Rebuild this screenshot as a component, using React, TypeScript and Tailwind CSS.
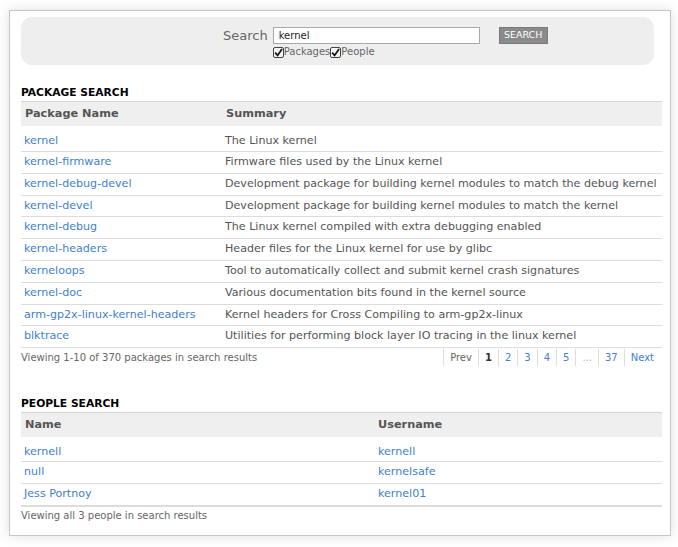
import React from "react";

const packages: [string, string][] = [
  ["kernel", "The Linux kernel"],
  ["kernel-firmware", "Firmware files used by the Linux kernel"],
  ["kernel-debug-devel", "Development package for building kernel modules to match the debug kernel"],
  ["kernel-devel", "Development package for building kernel modules to match the kernel"],
  ["kernel-debug", "The Linux kernel compiled with extra debugging enabled"],
  ["kernel-headers", "Header files for the Linux kernel for use by glibc"],
  ["kerneloops", "Tool to automatically collect and submit kernel crash signatures"],
  ["kernel-doc", "Various documentation bits found in the kernel source"],
  ["arm-gp2x-linux-kernel-headers", "Kernel headers for Cross Compiling to arm-gp2x-linux"],
  ["blktrace", "Utilities for performing block layer IO tracing in the linux kernel"],
];

const people: [string, string][] = [
  ["kernell", "kernell"],
  ["null", "kernelsafe"],
  ["Jess Portnoy", "kernel01"],
];

function Check() {
  return (
    <span className="inline-flex h-[11px] w-[11px] items-center justify-center rounded-[2px] border border-[#444] bg-[#f4f4f4]">
      <svg width="9" height="9" viewBox="0 0 9 9">
        <path d="M1.2 4.6 L3.6 7.4 L8 1" fill="none" stroke="#111" strokeWidth="1.7" />
      </svg>
    </span>
  );
}

export default function App() {
  return (
    <div className="min-h-[547px] bg-white pl-[9px] pt-[10px]" style={{ fontFamily: '"DejaVu Sans", Verdana, sans-serif' }}>
      <div className="h-[526px] w-[662px] border border-[#c6c6c6] bg-white pl-[11px] pr-[8px] pt-[6px] shadow-[0_0_12px_rgba(0,0,0,0.13)]">
        {/* search panel */}
        <div className="mr-[8px] h-[48px] rounded-[11px] bg-[#eeeeee] pl-[202px] pt-[10px]">
          <div className="flex items-start">
            <span className="mr-[5px] text-[13px] leading-[17px] text-[#666]">Search</span>
            <div className="flex flex-col">
              <div className="flex h-[17px] w-[207px] items-center border border-[#a9a9a9] bg-white pl-[5px] text-[10px] text-[#222]">
                kernel
              </div>
              <div className="mt-[2px] flex items-center text-[10px] leading-[12px] text-[#666]">
                <Check />
                <span>Packages</span>
                <Check />
                <span>People</span>
              </div>
            </div>
            <div className="ml-[19px] flex h-[17px] w-[49px] items-center justify-center border border-[#7a7a7a] bg-[#8a8a8a] text-[9.5px] text-white">
              SEARCH
            </div>
          </div>
        </div>

        {/* package search */}
        <div className="mt-[21px] mb-[2px] text-[10.7px] font-bold leading-[13px] text-black">PACKAGE SEARCH</div>
        <div className="border-t border-[#d6d6d6]">
          <div className="flex h-[24px] items-center bg-[#efefef] text-[11.3px] font-bold text-[#555]">
            <div className="w-[200px] pl-[4px]">Package Name</div>
            <div className="pl-[5px]">Summary</div>
          </div>
          {packages.map(([name, summary], i) => (
            <div
              key={name}
              className={
                i === 0
                  ? "flex h-[26px] items-center border-b border-[#dcdcdc] pt-[6px] text-[11.1px] whitespace-nowrap"
                  : "flex h-[21.8px] items-center border-b border-[#dcdcdc] text-[11.1px] whitespace-nowrap"
              }
            >
              <div className="w-[200px] pl-[3px] text-[#3f7fd0]">{name}</div>
              <div className="pl-[4px] text-[#555]">{summary}</div>
            </div>
          ))}
          <div className="flex h-[18px] items-center justify-between text-[10px]">
            <span className="text-[#666]">Viewing 1-10 of 370 packages in search results</span>
            <div className="flex h-[17px] items-center">
              <span className="flex h-full items-center border-l border-[#dedede] px-[6px] text-[#666]">Prev</span>
              <span className="flex h-full items-center border-l border-[#dedede] px-[6px] font-bold text-[#333]">1</span>
              <span className="flex h-full items-center border-l border-[#dedede] px-[6px] text-[#3f7fd0]">2</span>
              <span className="flex h-full items-center border-l border-[#dedede] px-[6px] text-[#3f7fd0]">3</span>
              <span className="flex h-full items-center border-l border-[#dedede] px-[6px] text-[#3f7fd0]">4</span>
              <span className="flex h-full items-center border-l border-[#dedede] px-[6px] text-[#3f7fd0]">5</span>
              <span className="flex h-full items-center border-l border-[#dedede] px-[6px] text-[#9ab4d8]">...</span>
              <span className="flex h-full items-center border-l border-[#dedede] px-[6px] text-[#3f7fd0]">37</span>
              <span className="flex h-full items-center border-l border-[#dedede] pl-[6px] pr-[8px] text-[#3f7fd0]">Next</span>
            </div>
          </div>
        </div>

        {/* people search */}
        <div className="mt-[31px] mb-[2px] text-[10.7px] font-bold leading-[13px] text-black">PEOPLE SEARCH</div>
        <div className="border-t border-[#d6d6d6]">
          <div className="flex h-[24px] items-center bg-[#efefef] text-[11.3px] font-bold text-[#555]">
            <div className="w-[353px] pl-[4px]">Name</div>
            <div className="pl-[4px]">Username</div>
          </div>
          {people.map(([name, user], i) => (
            <div
              key={user}
              className={
                i === 0
                  ? "flex h-[25px] items-center border-b border-[#dcdcdc] pt-[6px] text-[11.1px]"
                  : i === 2
                  ? "flex h-[23px] items-center border-b-2 border-[#dcdcdc] text-[11.1px]"
                  : "flex h-[22px] items-center border-b border-[#dcdcdc] text-[11.1px]"
              }
            >
              <div className="w-[353px] pl-[3px] text-[#3f7fd0]">{name}</div>
              <div className="pl-[4px] text-[#3f7fd0]">{user}</div>
            </div>
          ))}
          <div className="mt-[1.5px] text-[10px] leading-[13px] text-[#666]">Viewing all 3 people in search results</div>
        </div>
      </div>
    </div>
  );
}
